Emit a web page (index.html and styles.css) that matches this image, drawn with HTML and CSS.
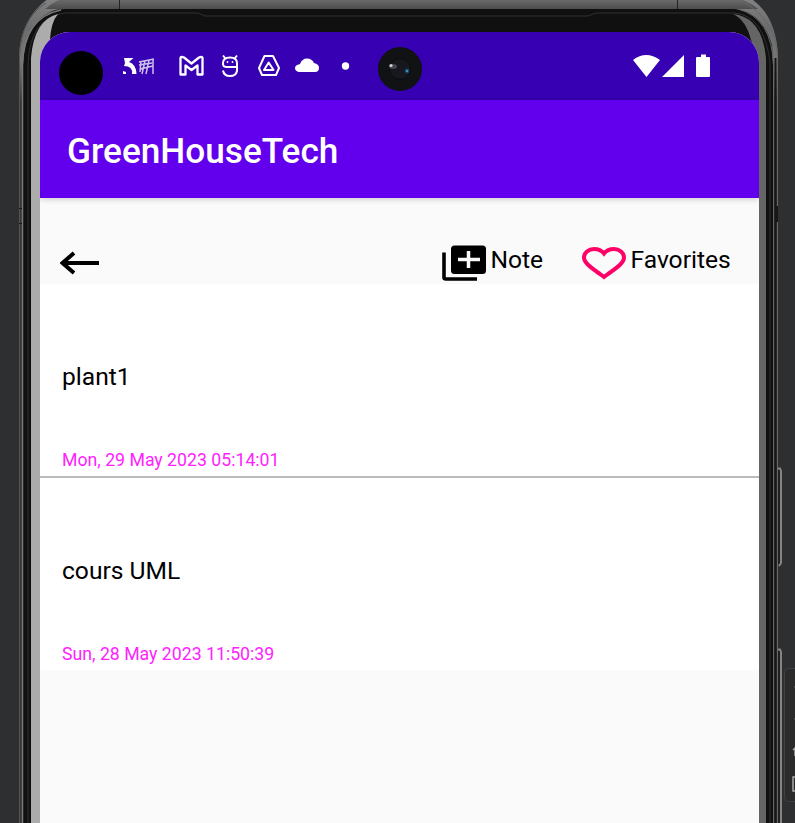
FILE: index.html
```html
<!DOCTYPE html>
<html lang="en">
<head>
<meta charset="utf-8">
<title>GreenHouseTech</title>
<link rel="stylesheet" href="styles.css">
</head>
<body>
<svg class="device" width="795" height="823" viewBox="0 0 795 823" aria-hidden="true">
  <defs>
    <linearGradient id="rail" x1="0" y1="0" x2="0" y2="1"><stop offset="0" stop-color="#858585"/><stop offset=".04" stop-color="#6c6c6c"/><stop offset=".08" stop-color="#777"/><stop offset=".13" stop-color="#343434"/></linearGradient>
    <linearGradient id="top" x1="0" y1="0" x2="0" y2="1"><stop offset="0" stop-color="#777"/><stop offset="1" stop-color="#4d4d4d"/></linearGradient>
  </defs>
  <path d="M19 823V57Q20 15 54-5H745Q776 11 778 56V823Z" fill="url(#rail)"/>
  <path d="M45 9Q55 0 70-4H730Q748 0 758 9Z" fill="url(#top)"/>
  <path d="M23 823V65Q24 24 52 11Q57 9 65 9H735Q762 12 772 45L773 65V823Z" fill="#101010"/>
  <path d="M22.5 823V65Q24 17 61 10" fill="none" stroke="#777" stroke-width="1.5"/>
  <path d="M19.5 823V57Q21 18 46 3" fill="none" stroke="#555"/>
  <path d="M28 823V65Q29 18 65 13H198L205 16H588L596 13H735Q764 16 770 62V823" fill="none" stroke="#303030"/>
  <path d="M773.5 823V65Q772 18 738 9M777.5 823V55Q775 20 745 3" fill="none" stroke="#686868"/>
  <path d="M775.5 823V58" stroke="#171717" stroke-width="2"/>
  <path d="M31 823V58Q34 20 58 14Q51 22 50 40L40 60V823Z" fill="#acacac"/>
  <path d="M766 823V58Q762 17 733 14Q746 20 751 40L759 60V823Z" fill="#656565"/>
  <path d="M119.500 0V9M677.500 0V9" stroke="#222"/>
  <path d="M776.500 206V222" stroke="#171717" stroke-width="3"/>
  <path d="M19 208.500H22M19 223.500H22" stroke="#171717"/>
  <path d="M780 470V564M780 651V823" stroke="#202020" stroke-width="4"/>
  <path d="M778 468.500H780L781 471V563L779 566M778 649.500H780L781 652V823" fill="none" stroke="#858585" stroke-width="2"/>
  <rect x="784.500" y="668.500" width="30" height="133" rx="4" fill="#2b2b2b" stroke="#414141"/>
  <path d="M794 687h2M794 719h2" stroke="#666"/>
  <path d="M793 750l2-2v8M798 777h-5v14h5" fill="none" stroke="#aaa" stroke-width="1.500"/>
</svg>
<main class="screen">
  <div class="status">
    <span class="punch"></span>
    <svg class="status-icons" width="676" height="68" viewBox="83 32 676 68" aria-hidden="true">
      <path d="M124 58H133.500L129 62Q136 64 136.500 74H132Q133 66 124 66L125 63ZM123 71l3 1v2h-3z" fill="#fff"/>
      <path d="M139 62l15-3M139 65l13-2M141 61l-1 11M145 61l-3 13M149 60l-3 14M153 59v15M140 69l13-3" fill="none" stroke="#fff" stroke-width="1.500" opacity=".75"/>
      <path d="M180.500 57.800Q181 56 184 57.500L191.500 63.500L199 57.500Q202 56 202.500 57.800V74.500H197.500V65.500L191.500 70L185.500 65.500V74.500H180.500Z" fill="none" stroke="#fff" stroke-width="2.300" stroke-linejoin="round"/>
      <g fill="none" stroke="#fff" stroke-width="2"><path d="M225 58l-2-2.500M235 58l2-2.500M237 66V63Q237 57.500 230 57.500T223 63V64Q223 67 227 67H237V71Q236 76 230 76T223 70.500"/><path d="M264.500 56H273L279 68L276 75H262L259 68Z" stroke-linejoin="round"/><path d="M268.700 62.500L273.500 70H264Z" stroke-linejoin="round"/></g>
      <g fill="#fff"><circle cx="227.500" cy="62" r=".9"/><circle cx="232.500" cy="62" r=".9"/><path d="M299 72Q295 71 295 68T300 64Q302 58.500 307 58.500Q312 58.500 314 63Q319 64 319 67.500Q319 72 315 72Z"/><circle cx="345.500" cy="66" r="3.700"/><path d="M633 60Q646 50 660 60L646.500 77ZM684 55V77H662ZM697 57h4v-2.500h5V57h3q1 0 1 1v18q0 1-1 1h-12q-1 0-1-1V58q0-1 1-1"/></g>
      <circle cx="400" cy="69" r="22" fill="#111214"/><circle cx="400" cy="69" r="10.500" fill="#17171e" stroke="#0b0b0d"/><ellipse cx="393" cy="66.500" rx="4" ry="2.500" fill="#626073" opacity=".65"/><circle cx="391" cy="65.500" r="1.600" fill="#ccd6c8"/><circle cx="407" cy="71" r="2.400" fill="#15446a"/><circle cx="407" cy="71" r="1" fill="#58a4d3"/>
    </svg>
  </div>
  <header class="appbar"><h1>GreenHouseTech</h1></header>
  <nav class="toolbar">
    <svg class="back" width="40" height="24" viewBox="0 0 40 24"><path d="M14 2L2.500 12L14 22M2 12H39" fill="none" stroke="#000" stroke-width="4"/></svg>
    <div class="action note">
      <svg width="44" height="36" viewBox="0 0 44 36"><path d="M2 7.500V32.500Q2 34 4 34H35" fill="none" stroke="#000" stroke-width="3.600"/><rect x="9" y=".5" width="35" height="28.500" rx="3.500"/><path d="M26.500 6V23M16 14.500H38" stroke="#fafafa" stroke-width="3.500"/></svg>
      <span>Note</span>
    </div>
    <div class="action favorites">
      <svg width="44" height="34" viewBox="0 0 44 34"><path d="M22 30L18 27C8 20 2 15.500 2 10.500C2 6 6.500 2 12 2C16 2 20 4 22 6.500C24 4 28 2 32 2C37.500 2 42 6 42 10.500C42 15.500 36 20 26 27Z" fill="none" stroke="#ff0066" stroke-width="4"/></svg>
      <span>Favorites</span>
    </div>
  </nav>
  <section class="notes">
    <article class="card"><h2>plant1</h2><time>Mon, 29 May 2023 05:14:01</time></article>
    <article class="card"><h2>cours UML</h2><time>Sun, 28 May 2023 11:50:39</time></article>
  </section>
</main>
</body>
</html>
```
FILE: styles.css
```css
* { box-sizing: border-box; }
body { margin: 0; height: 823px; overflow: hidden; background: #2e2f31; font-family: Roboto, sans-serif; }
.device { position: absolute; inset: 0; z-index: -1; }
.screen { width: 719px; height: 791px; margin: 32px 0 0 40px; overflow: hidden; background: #fafafa; border-radius: 30px 30px 0 0; }
.status { height: 68px; background: #3700b3; display: flex; padding-left: 19px; }
.punch { width: 44px; height: 44px; margin-top: 19px; border-radius: 50%; background: #000; flex: none; }
.status-icons { display: block; flex: none; margin-left: -20px; }
.appbar { height: 98px; padding: 0 27px; display: flex; align-items: center; background: #6200ee; color: #fff; box-shadow: 0 1px 6px rgba(0,0,0,.2); }
h1 { margin: 4px 0 0; font-size: 35.2px; line-height: 42px; font-weight: 500; white-space: nowrap; }
.toolbar { height: 86px; padding: 47px 0 0 20px; display: flex; align-items: flex-start; }
.back { margin-top: 6px; }
.action { display: flex; align-items: flex-start; font-size: 24.6px; line-height: 30px; white-space: nowrap; }
.action span { margin: 0 0 0 4.5px; }
.note { margin-left: 342px; width: 140px; }
.favorites svg { margin-top: 2px; }
.card { height: 192px; padding: 78px 22px 0; background: #fff; }
.card + .card { margin-top: 2px; box-shadow: 0 -2px #bbb; }
.card:last-child { border-radius: 0 0 3px 3px; }
h2 { margin: 0; font-size: 24.6px; line-height: 30px; font-weight: 400; }
time { display: block; margin-top: 57px; font-size: 17.7px; line-height: 22px; color: #ff22ff; }
```
